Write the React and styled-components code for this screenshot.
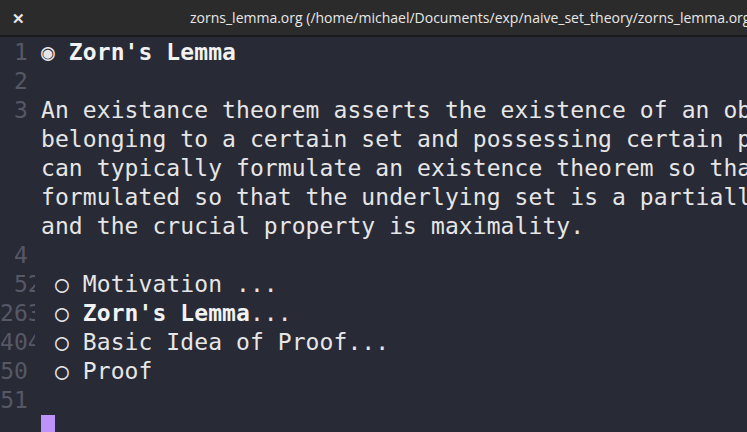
import React from 'react'
import styled, { createGlobalStyle } from 'styled-components'

const Global = createGlobalStyle`
html, body {
  margin: 0;
  padding: 0;
  background: #282a36;
  overflow: hidden;
}
`

const Window = styled.div`
width: 747px;
height: 432px;
background: #282a36;
display: flex;
flex-direction: column;
overflow: hidden;
`

const TitleBar = styled.div`
height: 35px;
flex-shrink: 0;
background: #2b2b2b;
border-bottom: 2px solid #1a1a1a;
display: flex;
align-items: center;
font-family: 'Open Sans', 'Noto Sans', sans-serif;
font-size: 14px;
color: #e8e8e8;
white-space: nowrap;
overflow: hidden;
`

const Close = styled.span`
width: 36px;
text-align: center;
font-size: 15px;
font-weight: 700;
flex-shrink: 0;
`

const Title = styled.span`
margin-left: 154px;
`

const Editor = styled.div`
padding-top: 1px;
font-family: 'DejaVu Sans Mono', monospace;
font-size: 23px;
letter-spacing: 0.08px;
line-height: 29px;
color: #e6e6e6;
`

const Line = styled.div`
display: flex;
height: 29px;
white-space: pre;
`

const Gutter = styled.span`
width: 35px;
flex-shrink: 0;
overflow: hidden;
color: #565866;
display: flex;
justify-content: ${p => (p.$wide ? 'flex-start' : 'flex-end')};
padding-right: ${p => (p.$wide ? '0' : '7px')};
box-sizing: border-box;
`

const Content = styled.span`
padding-left: 6px;
`

const Bold = styled.span`
font-weight: 700;
color: #f2f2f2;
`

const Cursor = styled.span`
display: inline-block;
width: 14px;
height: 29px;
background: #bd93f9;
`

const Row = ({ n, wide, children }) => (
  <Line>
    <Gutter $wide={wide}>{wide ? n.padStart(3, ' ') : n}</Gutter>
    <Content>{children}</Content>
  </Line>
)

const paragraph = [
  'An existance theorem asserts the existence of an object',
  'belonging to a certain set and possessing certain properties.',
  'can typically formulate an existence theorem so that it is',
  'formulated so that the underlying set is a partially ordered set',
  'and the crucial property is maximality.',
]

const App = () => (
  <Window>
    <Global />
    <TitleBar>
      <Close>✕</Close>
      <Title>zorns_lemma.org (/home/michael/Documents/exp/naive_set_theory/zorns_lemma.org) - GNU Emacs</Title>
    </TitleBar>
    <Editor>
      <Row n="1">◉ <Bold>Zorn's Lemma</Bold></Row>
      <Row n="2" />
      {paragraph.map((t, i) => (
        <Row key={i} n={i === 0 ? '3' : ''}>{t}</Row>
      ))}
      <Row n="4" />
      <Row n="52" wide> ○ Motivation ...</Row>
      <Row n="263" wide> ○ <Bold>Zorn's Lemma</Bold>...</Row>
      <Row n="404" wide> ○ Basic Idea of Proof...</Row>
      <Row n="50"> ○ Proof</Row>
      <Row n="51" />
      <Row n=""><Cursor /></Row>
    </Editor>
  </Window>
)

export default App
